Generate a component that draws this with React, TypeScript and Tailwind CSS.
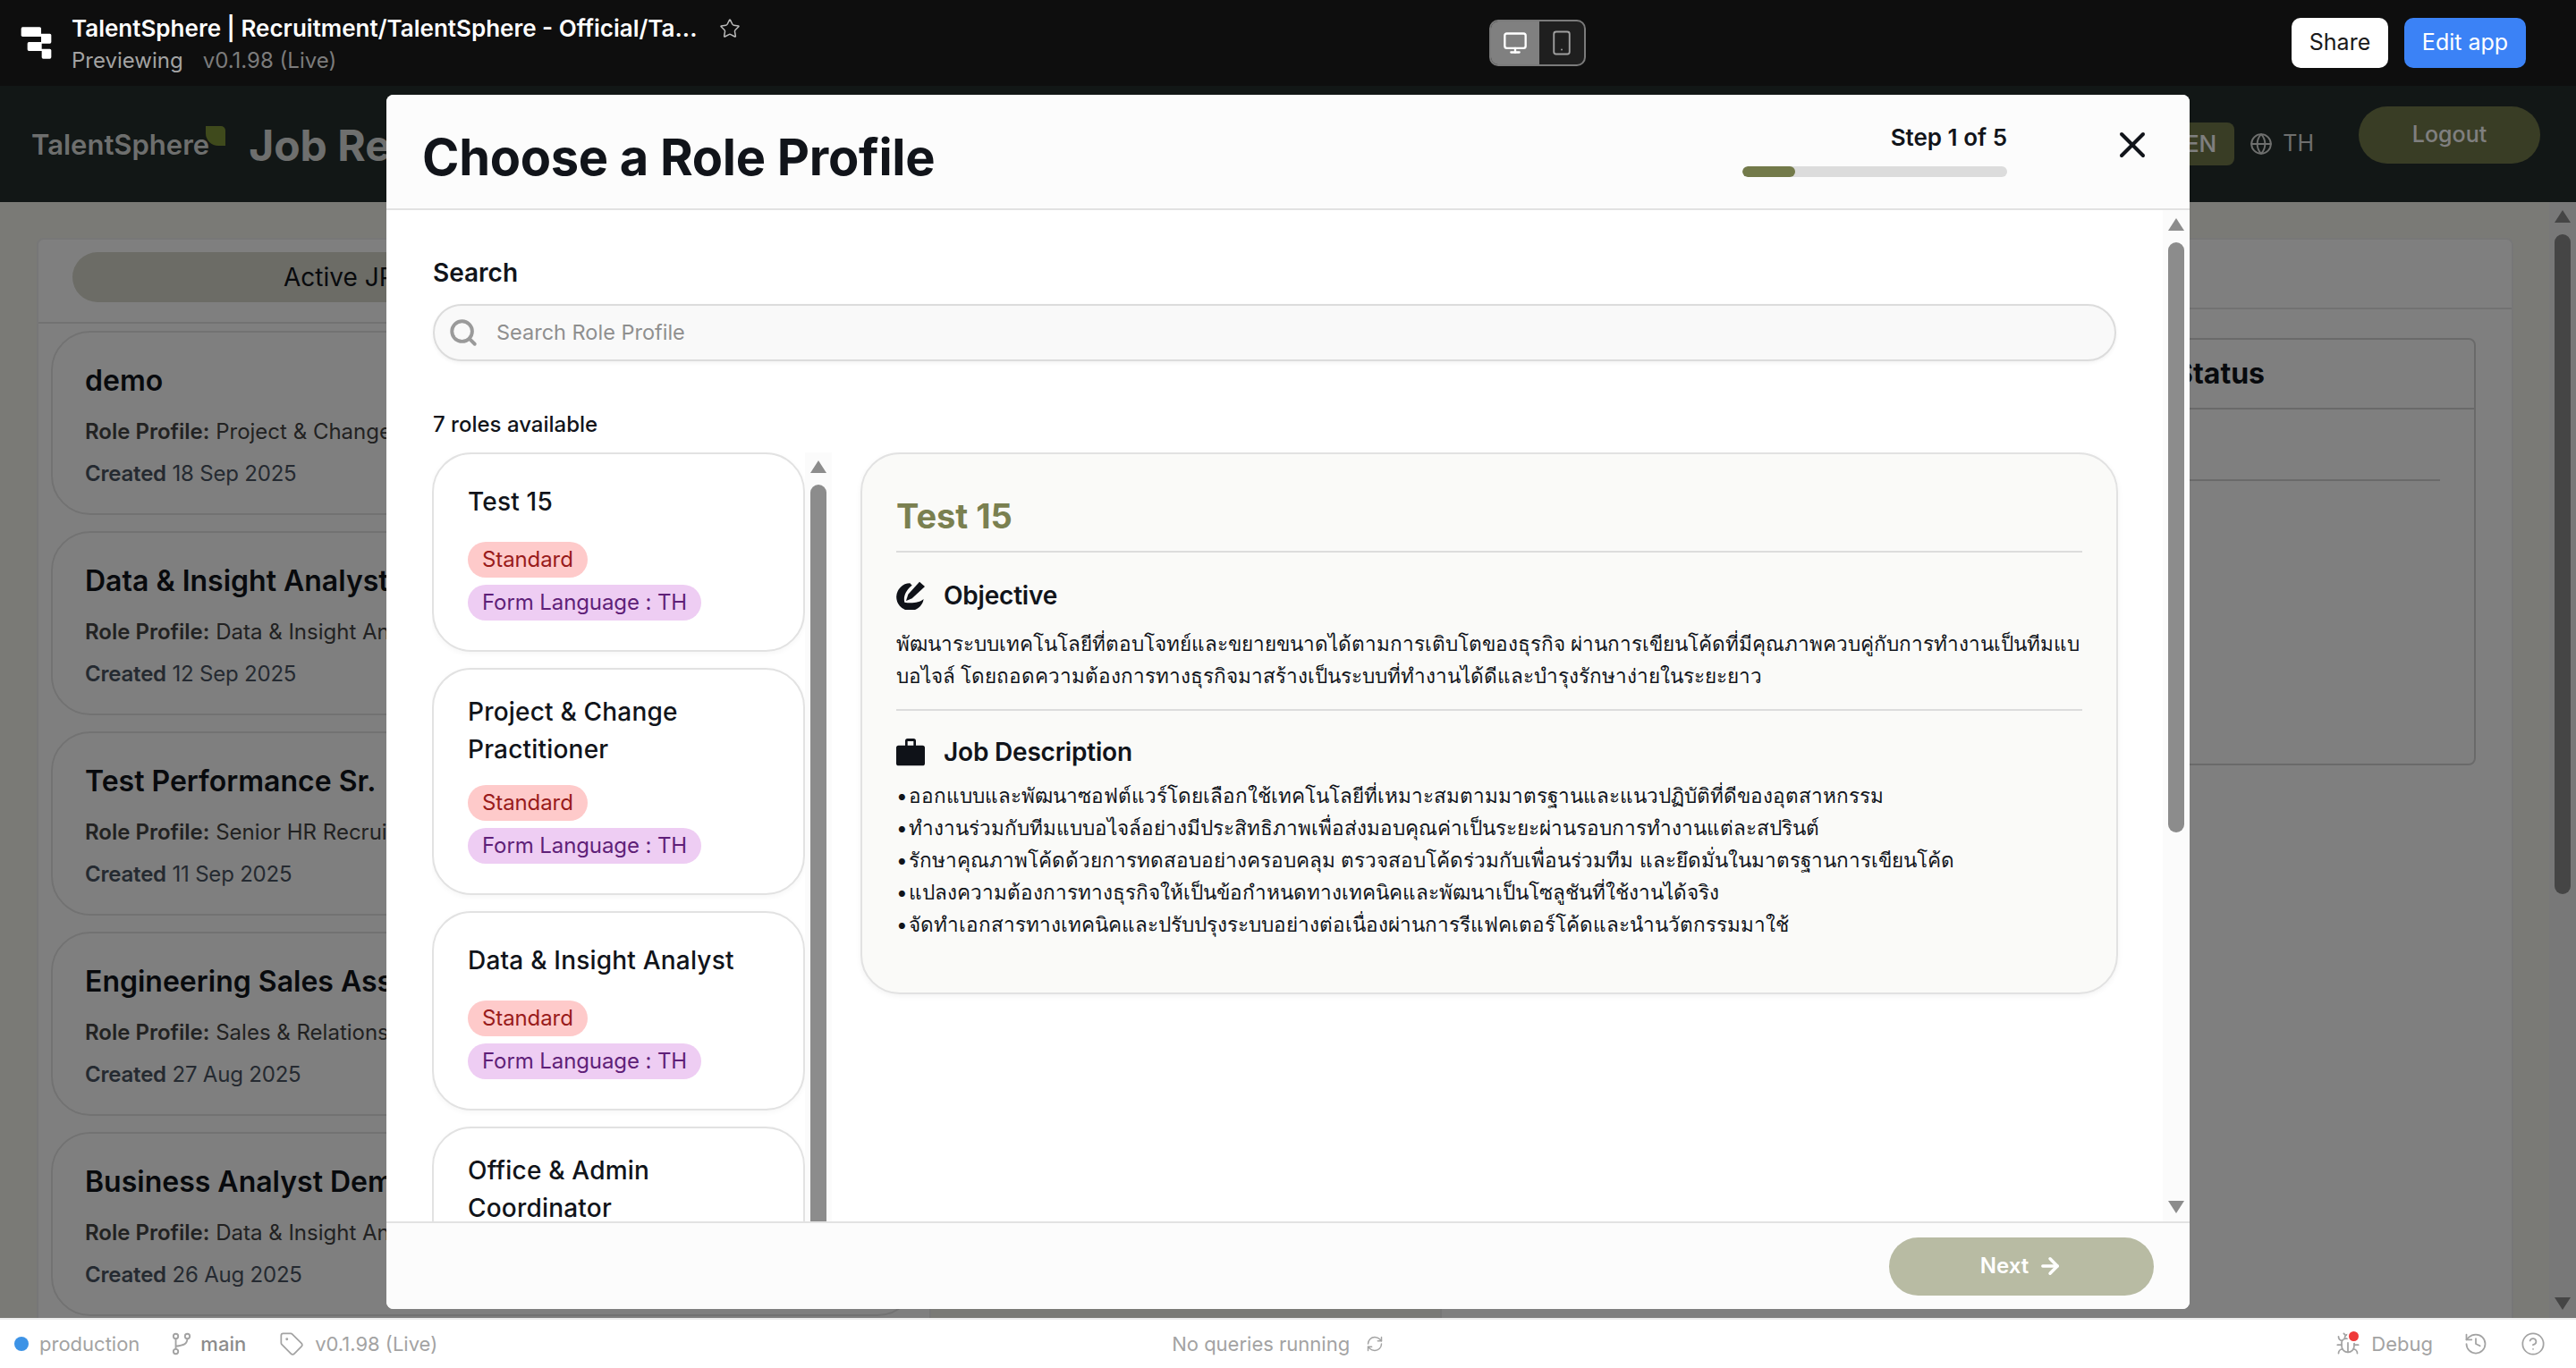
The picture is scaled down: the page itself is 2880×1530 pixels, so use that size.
import { ArrowRight, Bug, Globe, History, CircleHelp, RefreshCw, Search, Star, Tag, X, Monitor, Smartphone } from "lucide-react";

const roles = [
  { name: "Test 15" },
  { name: "Project & Change Practitioner" },
  { name: "Data & Insight Analyst" },
  { name: "Office & Admin Coordinator" },
];

const jobs = [
  { title: "demo", role: "Project & Change Practitioner", date: "18 Sep 2025" },
  { title: "Data & Insight Analyst", role: "Data & Insight Analyst", date: "12 Sep 2025" },
  { title: "Test Performance Sr.", role: "Senior HR Recruiter", date: "11 Sep 2025" },
  { title: "Engineering Sales Associate", role: "Sales & Relationship", date: "27 Aug 2025" },
  { title: "Business Analyst Demo", role: "Data & Insight Analyst", date: "26 Aug 2025" },
];

const duties = [
  "ออกแบบและพัฒนาซอฟต์แวร์โดยเลือกใช้เทคโนโลยีที่เหมาะสมตามมาตรฐานและแนวปฏิบัติที่ดีของอุตสาหกรรม",
  "ทำงานร่วมกับทีมแบบอไจล์อย่างมีประสิทธิภาพเพื่อส่งมอบคุณค่าเป็นระยะผ่านรอบการทำงานแต่ละสปรินต์",
  "รักษาคุณภาพโค้ดด้วยการทดสอบอย่างครอบคลุม ตรวจสอบโค้ดร่วมกับเพื่อนร่วมทีม และยึดมั่นในมาตรฐานการเขียนโค้ด",
  "แปลงความต้องการทางธุรกิจให้เป็นข้อกำหนดทางเทคนิคและพัฒนาเป็นโซลูชันที่ใช้งานได้จริง",
  "จัดทำเอกสารทางเทคนิคและปรับปรุงระบบอย่างต่อเนื่องผ่านการรีแฟคเตอร์โค้ดและนำนวัตกรรมมาใช้",
];

function RoleCard({ name }: { name: string }) {
  return (
    <div className="flex min-h-[223px] shrink-0 flex-col rounded-[44px] border-2 border-[#e2e2e2] bg-white px-[38px] pt-[26px] pb-[33px] shadow-[0_2px_6px_rgba(0,0,0,0.04)]">
      <div className="flex flex-1 items-center text-[28px] leading-[42px] font-medium tracking-[0.2px] text-[#11141a]">{name}</div>
      <div className="mt-[19px] flex flex-col items-start gap-[8px]">
        <span className="rounded-full bg-[#fecaca] px-[16px] text-[24px] leading-[40px] tracking-[-0.1px] text-[#991b1b]">Standard</span>
        <span className="rounded-full bg-[#eecdf3] px-[16px] text-[24px] leading-[40px] tracking-[-0.1px] text-[#5f1f78]">Form Language : TH</span>
      </div>
    </div>
  );
}

export default function App() {
  return (
    <div className="relative flex h-[1530px] w-[2880px] flex-col overflow-hidden bg-white font-['Inter','Noto_Sans',sans-serif]">
      {/* Retool preview bar */}
      <div className="flex h-[96px] shrink-0 items-center justify-between bg-[#0e0e0e] pr-[56px] pl-[16px]">
        <div className="flex w-[1649px] items-center">
          <svg width="52" height="52" viewBox="0 0 156 156" fill="#fff" className="mr-[12px]">
            <rect x="23" y="25" width="67" height="32" rx="5" />
            <path d="M60 47h59a5 5 0 0 1 5 5v23a5 5 0 0 1-5 5H92v18h27a5 5 0 0 1 5 5v23a5 5 0 0 1-5 5H97a5 5 0 0 1-5-5v-21H49a5 5 0 0 1-5-5V80a5 5 0 0 1 5-5h41V57H60z" />
          </svg>
          <div className="pt-[4px]">
            <div className="flex items-center">
              <span className="text-[26px] leading-[32px] font-semibold text-white">TalentSphere | Recruitment/TalentSphere - Official/Ta...</span>
              <Star className="ml-[25px] h-[24px] w-[24px] text-[#bbbbbb]" strokeWidth={1.5} />
            </div>
            <div className="mt-[4px] flex gap-[22px] text-[24px] leading-[32px]">
              <span className="text-[#a3a3a3]">Previewing</span>
              <span className="text-[#7c7c7c]">v0.1.98 (Live)</span>
            </div>
          </div>
        </div>
        <div className="flex h-[52px] w-[108px] overflow-hidden rounded-[10px] border-2 border-[#7a7a7a] bg-[#1f1f1f]">
          <div className="flex w-[54px] items-center justify-center bg-[#808080]">
            <Monitor className="h-[28px] w-[28px] text-white" strokeWidth={2} />
          </div>
          <div className="flex flex-1 items-center justify-center">
            <Smartphone className="h-[30px] w-[30px] text-[#a0a0a0]" strokeWidth={1.5} />
          </div>
        </div>
        <div className="flex flex-1 justify-end gap-[18px]">
          <div className="flex h-[56px] w-[108px] items-center justify-center rounded-[10px] bg-white text-[25px] text-[#1a1a1a]">Share</div>
          <div className="flex h-[56px] w-[136px] items-center justify-center rounded-[10px] bg-[#3b82f6] text-[25px] text-white">Edit app</div>
        </div>
      </div>

      {/* App under the modal */}
      <div className="flex min-h-0 flex-1 flex-col bg-[#f5f5ed]">
        <div className="flex h-[130px] shrink-0 items-center bg-[#242e2c] pr-[40px] pl-[35px]">
          <div className="mt-[3px] flex items-start">
            <span className="text-[31px] font-semibold text-[#dcdfdc]">TalentSphere</span>
            <span className="mt-[2px] ml-[-4px] h-[22px] w-[22px] rounded-tr-[5px] rounded-bl-[14px] bg-[#7f9438]" />
          </div>
          <span className="mt-[3px] ml-[26px] text-[48px] font-bold text-[#dcdfdc]">Job Recruitment</span>
          <div className="flex-1" />
          <span className="rounded-[8px] bg-[#737a4a] px-[20px] text-[26px] leading-[48px] font-medium text-white">EN</span>
          <Globe className="ml-[17px] h-[26px] w-[26px] text-[#dcdfdc]" strokeWidth={1.75} />
          <span className="mr-[50px] ml-[11px] text-[25px] text-[#dcdfdc]">TH</span>
          <div className="flex h-[64px] w-[203px] -translate-y-[10px] items-center justify-center rounded-full bg-[#737a4a] text-[25px] font-medium text-white">Logout</div>
        </div>

        <div className="flex min-h-0 flex-1">
          <div className="flex flex-1 justify-between pt-[40px] pr-[40px] pl-[41px]">
            <div className="w-[1000px] rounded-t-[8px] border-2 border-b-0 border-[#eeeeee] bg-white">
              <div className="border-b-2 border-[#e5e5e5] px-[38px] pt-[14px] pb-[22px]">
                <div className="flex h-[56px] items-center rounded-full bg-[#d8d8cc] pl-[236px] text-[28px] text-[#11141a]">Active JP</div>
              </div>
              <div className="flex flex-col gap-[18px] px-[14px] pt-[8px]">
                {jobs.map((j) => (
                  <div key={j.date} className="h-[206px] rounded-[44px] border-2 border-[#e5e5e5] bg-white px-[36px] pt-[32px]">
                    <div className="text-[32px] leading-[44px] font-semibold text-[#11141a]">{j.title}</div>
                    <div className="mt-[18px] text-[24px] leading-[34px] text-[#444]"><b className="font-semibold">Role Profile:</b> {j.role}</div>
                    <div className="mt-[14px] text-[24px] leading-[32px] tracking-[-0.2px] text-[#4b5563]"><b className="font-semibold">Created</b> {j.date}</div>
                  </div>
                ))}
              </div>
            </div>
            <div className="w-[1200px] rounded-t-[8px] border-2 border-b-0 border-[#eeeeee] bg-white">
              <div className="h-[78px] border-b-2 border-[#e5e5e5]" />
              <div className="mt-[32px] mr-[40px] ml-auto h-[478px] w-[1000px] rounded-[8px] border-2 border-[#d5d5d5]">
                <div className="flex h-[78px] items-center border-b-2 border-[#d5d5d5] pl-[661px] text-[32px] font-bold text-[#11141a]">Status</div>
                <div className="mx-[38px] mt-[78px] border-b-2 border-[#d5d5d5]" />
              </div>
            </div>
          </div>
          <div className="flex h-full w-[30px] shrink-0 flex-col items-center bg-[#f0f0f0] py-[9px]">
            <div className="h-0 w-0 border-x-[9px] border-b-[14px] border-x-transparent border-b-[#8a8a8a]" />
            <div className="mt-[13px] h-[738px] w-[18px] rounded-full bg-[#8a8a8a]" />
            <div className="flex-1" />
            <div className="h-0 w-0 border-x-[9px] border-t-[14px] border-x-transparent border-t-[#8a8a8a]" />
          </div>
        </div>
      </div>

      {/* Retool status bar */}
      <div className="z-20 flex h-[56px] shrink-0 items-center border-t-2 border-[#ececec] bg-white pr-[34px] pl-[16px] text-[22px] text-[#a3a3a3]">
        <span className="h-[16px] w-[16px] rounded-full bg-[#3d93e6]" />
        <span className="ml-[12px]">production</span>
        <svg width="26" height="28" viewBox="0 0 24 26" fill="none" stroke="currentColor" strokeWidth="1.75" className="ml-[34px]">
          <circle cx="6" cy="5" r="2.500" />
          <circle cx="18" cy="5" r="2.500" />
          <circle cx="6" cy="21" r="2.500" />
          <path d="M6 7.500v11M18 7.500c0 6-4 7-12 8" />
        </svg>
        <span className="ml-[8px] font-medium text-[#8c8c8c]">main</span>
        <Tag className="ml-[37px] h-[28px] w-[28px]" strokeWidth={1.5} />
        <span className="ml-[12px]">v0.1.98 (Live)</span>
        <span className="ml-[821px]">No queries running</span>
        <RefreshCw className="ml-[18px] h-[20px] w-[20px]" strokeWidth={1.75} />
        <div className="flex-1" />
        <div className="relative">
          <Bug className="h-[28px] w-[28px]" strokeWidth={1.5} />
          <span className="absolute top-0 right-[2px] h-[11px] w-[11px] rounded-full bg-[#ef3a3a] ring-2 ring-white" />
        </div>
        <span className="ml-[12px]">Debug</span>
        <History className="ml-[34px] h-[28px] w-[28px]" strokeWidth={1.5} />
        <CircleHelp className="ml-[36px] h-[28px] w-[28px]" strokeWidth={1.5} />
      </div>

      {/* Backdrop */}
      <div className="absolute inset-x-0 top-[96px] bottom-[56px] bg-black/50" />

      {/* Modal */}
      <div className="absolute top-[106px] left-[432px] flex h-[1358px] w-[2016px] flex-col overflow-hidden rounded-[8px] bg-white">
        <div className="flex h-[129px] shrink-0 items-start border-b-2 border-[#e2e2e2] bg-[#fcfcfc] pr-[40px] pl-[40px]">
          <h1 className="mt-[38px] text-[56px] leading-[64px] font-bold tracking-[-0.3px] text-[#11141a]">Choose a Role Profile</h1>
          <div className="flex-1" />
          <div className="mt-[32px] flex w-[296px] flex-col items-end">
            <span className="text-[26px] leading-[32px] font-semibold text-[#11141a]">Step 1 of 5</span>
            <div className="mt-[16px] h-[12px] w-full overflow-hidden rounded-full bg-[#dcdcdc]">
              <div className="h-full w-[20%] rounded-full bg-[#737a4a]" />
            </div>
          </div>
          <X className="mt-[32px] ml-[116px] h-[48px] w-[48px] text-[#11141a]" strokeWidth={2} />
        </div>

        <div className="flex min-h-0 flex-1">
          <div className="min-w-0 flex-1 overflow-hidden pt-[52px] pl-[52px]">
            <div className="text-[28px] leading-[36px] font-semibold text-[#11141a]">Search</div>
            <div className="mt-[17px] flex h-[64px] w-[1882px] items-center rounded-full border-2 border-[#dcdcdc] bg-[#f9f9f9] pl-[15px] shadow-[0_2px_4px_rgba(0,0,0,0.05)]">
              <Search className="h-[34px] w-[34px] text-[#9a9a9a]" strokeWidth={2.75} />
              <span className="ml-[20px] text-[23.5px] text-[#8f8f8f]">Search Role Profile</span>
            </div>
            <div className="mt-[55px] text-[24px] leading-[32px] font-medium text-[#11141a]">7 roles available</div>
            <div className="mt-[15px] -ml-[1px] flex h-[863px] gap-[32px]">
              <div className="flex h-full w-[447px] shrink-0 overflow-hidden">
                <div className="flex w-[417px] shrink-0 flex-col gap-[18px]">
                  {roles.map((r) => (
                    <RoleCard key={r.name} name={r.name} />
                  ))}
                </div>
                <div className="flex h-full w-[30px] shrink-0 flex-col items-center bg-[#fbfbfb] pt-[9px]">
                  <div className="h-0 w-0 border-x-[9px] border-b-[14px] border-x-transparent border-b-[#8c8c8c]" />
                  <div className="mt-[13px] w-[18px] flex-1 rounded-t-full bg-[#8c8c8c]" />
                </div>
              </div>
              <div className="h-[606px] w-[1406px] shrink-0 rounded-[44px] border-2 border-[#e2e2e2] bg-[#fafaf8] px-[38px] pt-[45px] shadow-[0_2px_6px_rgba(0,0,0,0.05)]">
                <div className="border-b-2 border-[#dcdcdc] pb-[15px] text-[38px] leading-[48px] font-bold text-[#7a8050]">Test 15</div>
                <div className="mt-[30px] flex items-center gap-[21px]">
                  <svg width="32" height="32" viewBox="22 28 96 96" fill="#0f1218">
                    <path d="M100 30 118 46 75 86 55 94 62 72Z" />
                    <path d="M68 35A46 46 0 1 0 114 88C100 100 72 104 50 99 44 78 58 54 75 42Z" />
                  </svg>
                  <span className="text-[28px] leading-[36px] font-semibold tracking-[-0.2px] text-[#11141a]">Objective</span>
                </div>
                <p className="mt-[18px] border-b-2 border-[#dcdcdc] pb-[19px] text-[22.5px] leading-[36px] whitespace-nowrap text-[#11141a]">
                  พัฒนาระบบเทคโนโลยีที่ตอบโจทย์และขยายขนาดได้ตามการเติบโตของธุรกิจ ผ่านการเขียนโค้ดที่มีคุณภาพควบคู่กับการทำงานเป็นทีมแบ
                  <br />
                  บอไจล์ โดยถอดความต้องการทางธุรกิจมาสร้างเป็นระบบที่ทำงานได้ดีและบำรุงรักษาง่ายในระยะยาว
                </p>
                <div className="mt-[28px] flex items-center gap-[21px]">
                  <svg width="32" height="32" viewBox="0 0 24 24" fill="#0f1218">
                    <path d="M9.500 0.800h5a2 2 0 0 1 2 2V6.500H22a2 2 0 0 1 2 2V21.500a2 2 0 0 1-2 2H2a2 2 0 0 1-2-2V8.500a2 2 0 0 1 2-2h5.500V2.800a2 2 0 0 1 2-2zm0 2.200v3.500h5V3z" fillRule="evenodd" />
                  </svg>
                  <span className="text-[28px] leading-[36px] font-semibold tracking-[-0.2px] text-[#11141a]">Job Description</span>
                </div>
                <div className="mt-[13px] text-[22.5px] leading-[36px] text-[#11141a]">
                  {duties.map((d) => (
                    <div key={d}>
                      <span className="inline-block w-[14px]">•</span>
                      {d}
                    </div>
                  ))}
                </div>
              </div>
            </div>
          </div>
          <div className="flex h-full w-[30px] shrink-0 flex-col items-center bg-[#fbfbfb] py-[9px]">
            <div className="h-0 w-0 border-x-[9px] border-b-[14px] border-x-transparent border-b-[#8c8c8c]" />
            <div className="mt-[13px] h-[660px] w-[18px] rounded-full bg-[#8c8c8c]" />
            <div className="flex-1" />
            <div className="h-0 w-0 border-x-[9px] border-t-[14px] border-x-transparent border-t-[#8c8c8c]" />
          </div>
        </div>

        <div className="flex h-[98px] shrink-0 items-center justify-end border-t-2 border-[#e2e2e2] bg-[#fcfcfc] pr-[40px]">
          <div className="flex h-[65px] w-[296px] items-center justify-center gap-[10px] rounded-full bg-[#b8bba3] text-[24px] font-semibold text-white">
            Next <ArrowRight className="h-[28px] w-[28px]" strokeWidth={3} />
          </div>
        </div>
      </div>
    </div>
  );
}
